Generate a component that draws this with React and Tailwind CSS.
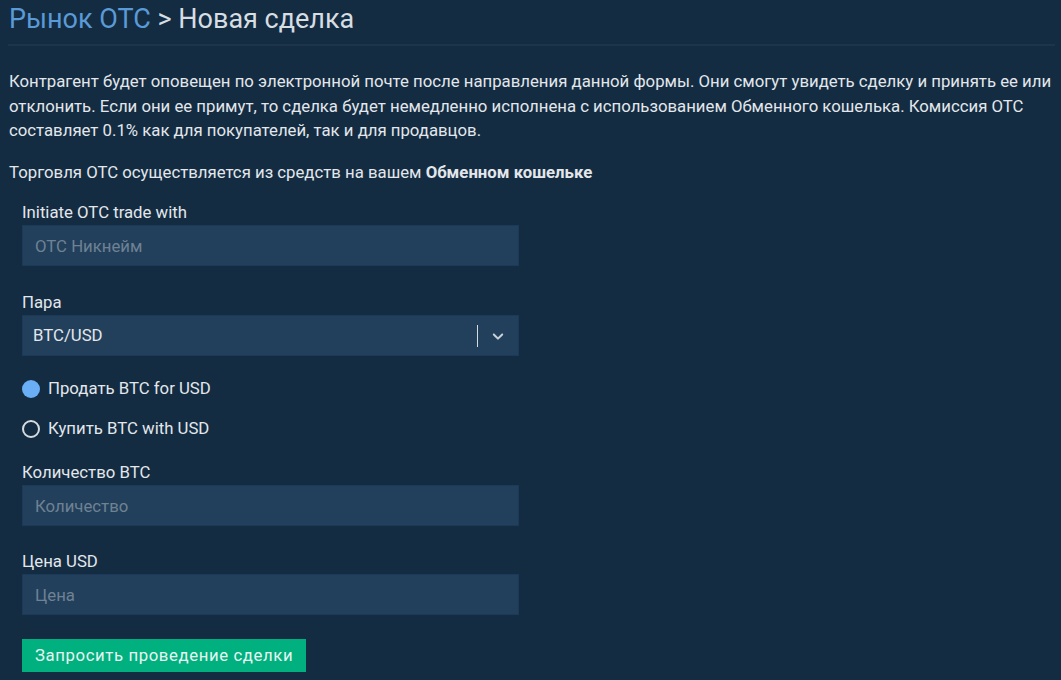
import React, { useState } from "react";

const Field = ({ label, placeholder }) => (
  <div className="flex flex-col">
    <label className="text-[16.75px] text-[#e3e7eb] leading-[20px] mb-[3px]">{label}</label>
    <input
      placeholder={placeholder}
      className="h-[41px] w-[497px] bg-[#22405c] border border-[#1b3a59] px-[12px] text-[16.75px] text-[#e3e7eb] placeholder:text-[#6f8293] outline-none"
    />
  </div>
);

const Radio = ({ checked, label, onClick }) => (
  <div className="flex items-center gap-[8px] cursor-pointer h-[20px]" onClick={onClick}>
    {checked ? (
      <span className="w-[18px] h-[18px] rounded-full bg-[#6aaef5]" />
    ) : (
      <span className="w-[18px] h-[18px] rounded-full border-2 border-[#d6dbe0]" />
    )}
    <span className="text-[16.75px] text-[#e3e7eb]">{label}</span>
  </div>
);

export default function App() {
  const [side, setSide] = useState("sell");
  return (
    <div className="min-h-[680px] bg-[#132c42] font-['Roboto',sans-serif] px-[8px] pt-[3px]">
      <div className="pb-[9px] border-b-2 border-[#1d344b] mr-[-2px]">
        <h1 className="text-[27px] leading-[32px] pl-[1px]">
          <span className="text-[#5a9ad6]">Рынок OTC</span>
          <span className="text-[#d8dde2]"> &gt; Новая сделка</span>
        </h1>
      </div>
      <div className="pl-[1px] pt-[23px] text-[16.75px] leading-[24.5px] text-[#e3e7eb]">
        <p>
          Контрагент будет оповещен по электронной почте после направления данной формы. Они смогут увидеть сделку и
          принять ее или отклонить. Если они ее примут, то сделка будет немедленно исполнена с использованием
          Обменного кошелька. Комиссия OTC составляет 0.1% как для покупателей, так и для продавцов.
        </p>
        <p className="mt-[17px]">
          Торговля OTC осуществляется из средств на вашем <b className="font-bold">Обменном кошельке</b>
        </p>
      </div>
      <div className="pl-[14px] pt-[18px] flex flex-col">
        <Field label="Initiate OTC trade with" placeholder="OTC Никнейм" />
        <div className="flex flex-col mt-[26px]">
          <label className="text-[16.75px] text-[#e3e7eb] leading-[20px] mb-[3px]">Пара</label>
          <div className="h-[41px] w-[497px] bg-[#22405c] border border-[#1b3a59] flex items-center pl-[10px]">
            <span className="flex-1 text-[16.75px] text-[#e3e7eb]">BTC/USD</span>
            <span className="w-[1px] h-[22px] bg-[#d6dbe0]" />
            <span className="w-[40px] flex items-center justify-center">
              <svg width="18" height="18" viewBox="0 0 20 20" fill="#c8d0d8">
                <path d="M4.516 7.548c.436-.446 1.043-.481 1.576 0L10 11.295l3.908-3.747c.533-.481 1.141-.446 1.574 0 .436.445.408 1.197 0 1.615-.406.418-4.695 4.502-4.695 4.502a1.095 1.095 0 0 1-1.576 0S4.924 9.581 4.516 9.163c-.409-.418-.436-1.170 0-1.615z" />
              </svg>
            </span>
          </div>
        </div>
        <div className="flex flex-col gap-[20px] mt-[23px]">
          <Radio checked={side === "sell"} label="Продать BTC for USD" onClick={() => setSide("sell")} />
          <Radio checked={side === "buy"} label="Купить BTC with USD" onClick={() => setSide("buy")} />
        </div>
        <div className="mt-[23px]">
          <Field label="Количество BTC" placeholder="Количество" />
        </div>
        <div className="mt-[25px]">
          <Field label="Цена USD" placeholder="Цена" />
        </div>
        <div className="mt-[24px]">
          <button className="h-[33px] px-[13px] bg-[#00b07f] text-[16.75px] text-[#e8f6f1] tracking-[0.6px]">
            Запросить проведение сделки
          </button>
        </div>
      </div>
    </div>
  );
}
